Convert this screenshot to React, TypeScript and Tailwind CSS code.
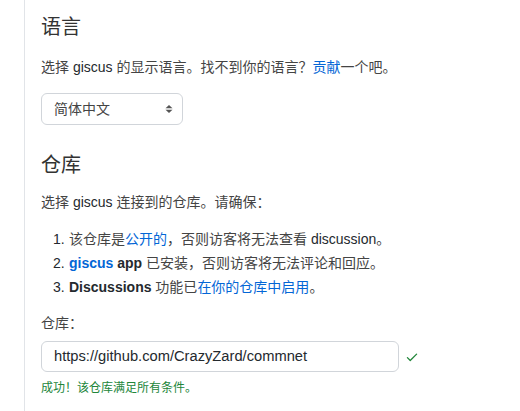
import React from "react";

const font = { fontFamily: '"Liberation Sans", "Noto Sans CJK SC", sans-serif' };

export default function App() {
  return (
    <div className="w-[520px] h-[411px] bg-white flex overflow-hidden" style={font}>
      <div className="w-[24px] shrink-0" />
      <div className="w-px bg-[#e1e4e8] shrink-0" />
      <div className="flex-1 pl-[16px] text-[#24292e]">
        <h2 className="mt-[15px] text-[20px] leading-[25px] font-normal text-[#333]">语言</h2>
        <p className="mt-[17px] text-[14px] leading-[21px] text-[#444]">
          选择 <span className="text-[#24292e]">giscus</span> 的显示语言。找不到你的语言？
          <span className="text-[#0366d6]">贡献</span>一个吧。
        </p>
        <div className="mt-[15px] w-[142px] h-[32px] border border-[#d1d5da] rounded-[6px] flex items-center justify-between pl-[12px] pr-[9px] text-[14px] text-[#444]">
          <span>简体中文</span>
          <svg width="8" height="12" viewBox="0 0 8 12">
            <path d="M4 2 L7.5 5.2 H0.5 Z" fill="#555" />
            <path d="M4 10 L7.5 6.8 H0.5 Z" fill="#555" />
          </svg>
        </div>
        <h2 className="mt-[28px] text-[20px] leading-[25px] font-normal text-[#333]">仓库</h2>
        <p className="mt-[14px] text-[14px] leading-[21px] text-[#444]">
          选择 <span className="text-[#24292e]">giscus</span> 连接到的仓库。请确保：
        </p>
        <div className="mt-[14px] text-[14px] leading-[24px] text-[#444]">
          <div className="flex">
            <span className="w-[28px] pl-[12px] text-[#24292e]">1.</span>
            <span>
              该仓库是<span className="text-[#0366d6]">公开的</span>，否则访客将无法查看{" "}
              <span className="text-[#24292e]">discussion</span>。
            </span>
          </div>
          <div className="flex">
            <span className="w-[28px] pl-[12px] text-[#24292e]">2.</span>
            <span>
              <span className="text-[#0366d6] font-bold">giscus</span>{" "}
              <span className="text-[#24292e] font-bold">app</span> 已安装，否则访客将无法评论和回应。
            </span>
          </div>
          <div className="flex">
            <span className="w-[28px] pl-[12px] text-[#24292e]">3.</span>
            <span>
              <span className="text-[#24292e] font-bold">Discussions</span> 功能已
              <span className="text-[#0366d6]">在你的仓库中启用</span>。
            </span>
          </div>
        </div>
        <p className="mt-[14px] text-[14px] leading-[21px] text-[#444]">仓库：</p>
        <div className="mt-[7px] flex items-center">
          <div className="w-[358px] h-[31px] border border-[#d1d5da] rounded-[6px] flex items-center pl-[12px] text-[14.7px] text-[#24292e]">
            https://github.com/CrazyZard/commnet
          </div>
          <svg className="ml-[6px]" width="14" height="14" viewBox="0 0 16 16">
            <path
              d="M13.78 4.22a.75.75 0 010 1.06l-7.25 7.25a.75.75 0 01-1.06 0L2.22 9.28a.75.75 0 011.06-1.06L6 10.94l6.72-6.72a.75.75 0 011.06 0z"
              fill="#22863a"
            />
          </svg>
        </div>
        <p className="mt-[7px] text-[12px] leading-[18px] text-[#22863a]">成功！该仓库满足所有条件。</p>
      </div>
    </div>
  );
}
